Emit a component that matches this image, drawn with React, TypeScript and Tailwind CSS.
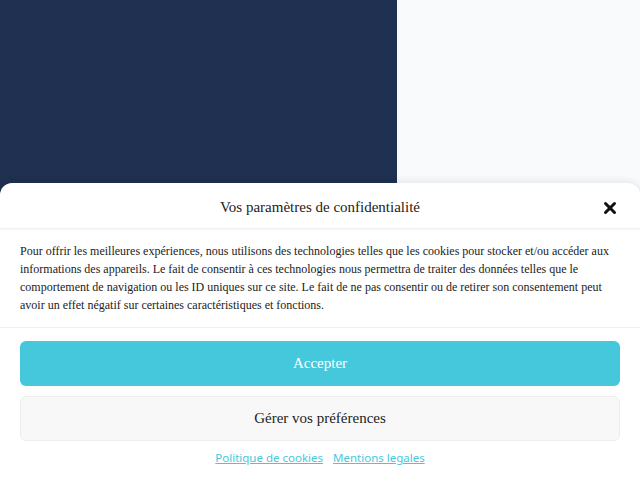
import { X } from "lucide-react";

export default function App() {
  return (
    <div className="relative w-[640px] h-[480px] overflow-hidden bg-[#f9fafc]">
      <div className="flex h-full">
        <div className="w-[397px] h-full bg-[#1f3050]" />
        <div className="flex-1 h-full bg-[#f9fafc]" />
      </div>

      {/* cookie banner */}
      <div
        className="absolute left-0 right-0 bottom-0 h-[297px] bg-white rounded-t-[12px] shadow-[0_0_10px_rgba(0,0,0,0.12)] flex flex-col"
        style={{ fontFamily: '"Liberation Serif", serif' }}
      >
        <div className="relative h-[46px] pt-[4px] flex items-center justify-center border-b border-[#f0f0f0] shadow-[0_1px_2px_rgba(0,0,0,0.03)]">
          <span className="text-[15px] text-[#222]">Vos paramètres de confidentialité</span>
          <button className="absolute right-[21px] top-[16px] text-[#111]" aria-label="Fermer">
            <X className="w-[18px] h-[18px]" strokeWidth={4} />
          </button>
        </div>

        <div className="px-5 pt-[13px] pb-[13px] border-b border-[#f0f0f0] text-[12px] leading-[18px] text-[#222]">
          Pour offrir les meilleures expériences, nous utilisons des technologies telles que les cookies pour stocker et/ou accéder aux informations des appareils. Le fait de consentir à ces technologies nous permettra de traiter des données telles que le comportement de navigation ou les ID uniques sur ce site. Le fait de ne pas consentir ou de retirer son consentement peut avoir un effet négatif sur certaines caractéristiques et fonctions.
        </div>

        <div className="px-5 pt-[13px] flex flex-col gap-[10px]">
          <button className="h-[45px] w-full rounded-[6px] bg-[#46c8dc] text-white text-[15px]">
            Accepter
          </button>
          <button className="h-[45px] w-full rounded-[6px] bg-[#f8f8f8] border border-[#eeeeee] text-[#222] text-[15px]">
            Gérer vos préférences
          </button>
        </div>

        <div
          className="flex justify-center gap-[10px] mt-[8px] text-[11.5px] text-[#46c8dc]"
          style={{ fontFamily: '"Noto Sans", sans-serif' }}
        >
          <a className="underline">Politique de cookies</a>
          <a className="underline">Mentions legales</a>
        </div>
      </div>
    </div>
  );
}
